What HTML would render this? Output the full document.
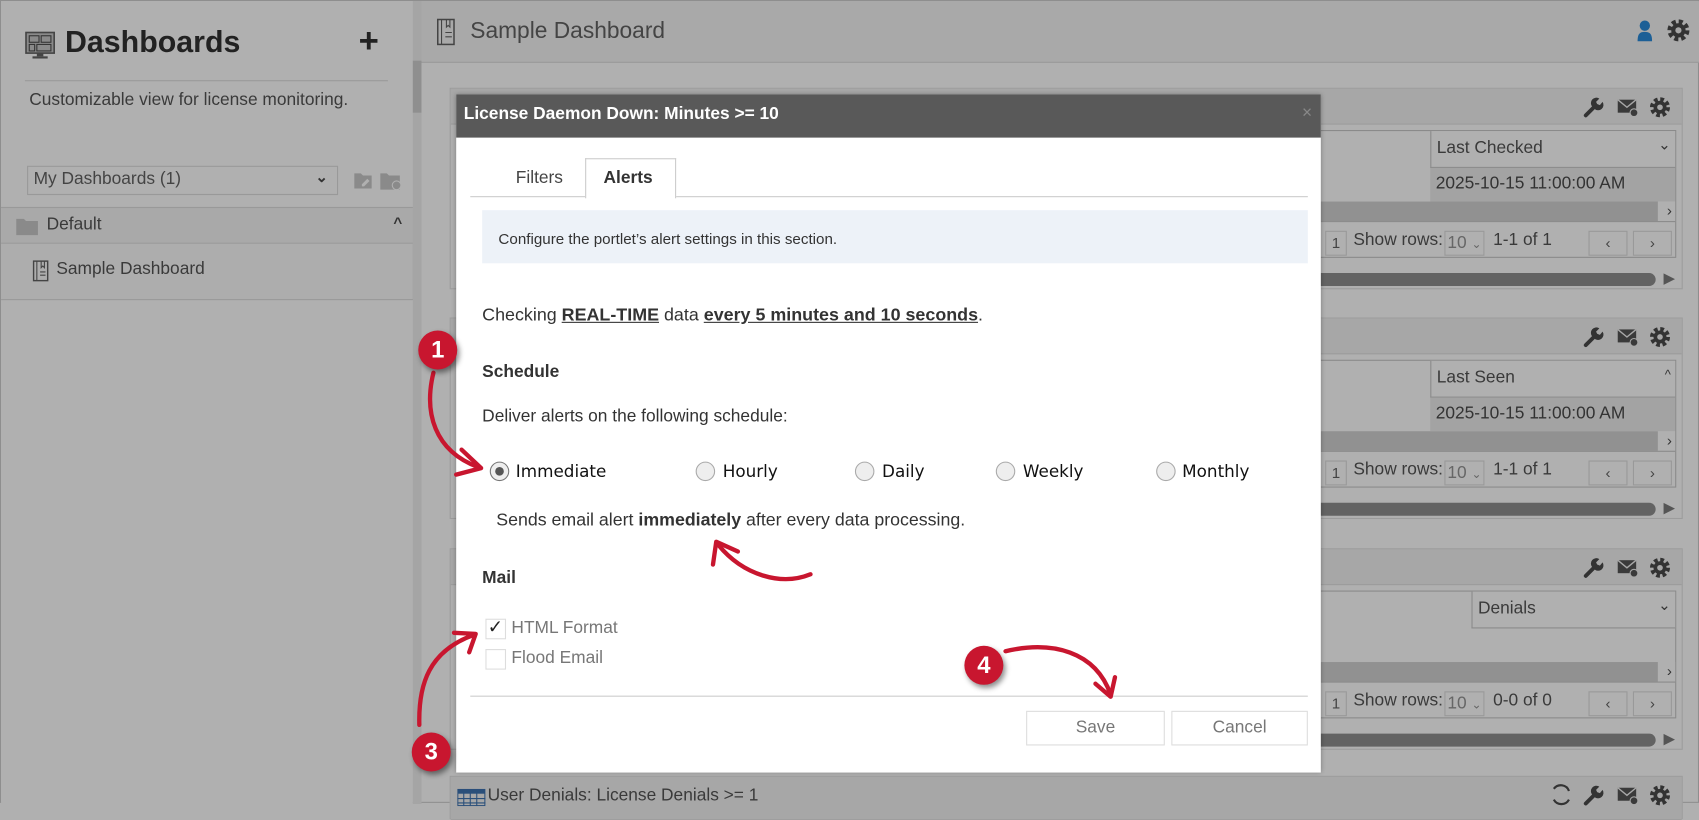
<!DOCTYPE html>
<html><head><meta charset="utf-8"><style>
*{box-sizing:border-box;margin:0;padding:0}
html,body{width:1699px;height:803px;overflow:hidden;background:#b0b0b0}
body{font-family:"Liberation Sans",Arial,sans-serif;color:#333}
#w{position:absolute;left:0;top:0;width:1568px;height:741px;transform:scale(1.08355);transform-origin:0 0;background:#b0b0b0;border:1px solid #8e8e8e}
.a{position:absolute}
.t{position:absolute;white-space:nowrap}
.panel{position:absolute;left:414px;width:1138px;height:186px;border:1px solid #9c9c9c;background:#b0b0b0}
.ph{position:absolute;left:0;top:0;right:0;height:33px;background:#a7a7a7;border-bottom:1px solid #9c9c9c}
.tbl{position:absolute;left:6px;right:5px;top:38px;height:118px;border:1px solid #8a8a8a}
.ch{position:absolute;top:0;height:34px;border-left:1px solid #8a8a8a;border-bottom:1px solid #8a8a8a;left:0;right:0;background:#b0b0b0}
.sb{position:absolute;left:0;right:0;top:65px;height:18px;background:#b0b0b0}
.sb i{position:absolute;left:0;right:16px;top:0;bottom:0;background:#919191}
.pg{position:absolute;left:0;right:0;top:83px;height:34px;border-top:1px solid #8a8a8a;font-size:16px;color:#3a3a3a}
.bs{position:absolute;left:6px;right:24px;top:170px;height:12px;border-radius:6px;background:#636363}
.icons{position:absolute;right:8px;top:6px}
.btn{position:absolute;top:8px;width:36px;height:23px;border:1px solid #999;text-align:center;font-size:14px;line-height:21px;color:#444}
.badge{position:absolute;width:36px;height:36px;border-radius:50%;background:#c8162f;color:#fff;font-weight:bold;font-size:22px;text-align:center;line-height:36px;box-shadow:2px 3px 5px rgba(0,0,0,.45);font-family:"Liberation Sans",sans-serif}
.radio{position:absolute;width:18px;height:18px;border-radius:50%;border:1px solid #aaa;background:#eee}
.rl{position:absolute;white-space:nowrap;font-family:"DejaVu Sans",Verdana,sans-serif;font-size:15.5px;color:#111;top:339px}
</style></head><body><div id="w">
<svg width="0" height="0" style="position:absolute"><defs>
<g id="gear"><circle cx="10" cy="10" r="7" fill="none" stroke="#333" stroke-width="4.5" stroke-dasharray="3.2 2.3"/><circle cx="10" cy="10" r="6" fill="#333"/><circle cx="10" cy="10" r="2.6" fill="#a7a7a7"/></g>
<g id="wrench"><path d="M3.5 18.5 L11 11" stroke="#333" stroke-width="3.6" stroke-linecap="round"/><path d="M9.5 10.5 A5 5 0 0 1 16 3 L13 6 L14 8 L16.5 9 L19 6 A5 5 0 0 1 11.5 12.5 Z" fill="#333"/></g>
<g id="mail"><rect x="1" y="4" width="17" height="12" fill="#3a3a3a"/><path d="M1 4 L9.5 11 L18 4" stroke="#a7a7a7" stroke-width="1.3" fill="none"/><circle cx="16" cy="16" r="3.6" fill="#3a3a3a" stroke="#a7a7a7" stroke-width="1"/></g>
</defs></svg>
<!-- sidebar -->
<div class="a" style="left:0;top:0;width:380px;height:741px;background:#b0b0b0"></div>
<svg class="a" style="left:22px;top:28px" width="28" height="26" viewBox="0 0 28 26"><rect x="1" y="1" width="26" height="19" fill="#8a8a8a" stroke="#444" stroke-width="1.5"/><rect x="4" y="4" width="9" height="6" fill="none" stroke="#333"/><rect x="15" y="4" width="9" height="6" fill="none" stroke="#333"/><rect x="4" y="12" width="5" height="6" fill="none" stroke="#333"/><rect x="11" y="12" width="13" height="6" fill="none" stroke="#333"/><rect x="11" y="20" width="6" height="3" fill="#444"/><rect x="7" y="23" width="14" height="2" fill="#444"/></svg>
<div class="t" style="left:59px;top:22px;font-size:28px;font-weight:bold;color:#222">Dashboards</div>
<div class="t" style="left:330px;top:18px;font-size:32px;font-weight:bold;color:#222">+</div>
<div class="a" style="left:22px;top:73px;width:335px;height:1px;background:#999"></div>
<div class="t" style="left:26px;top:83px;font-size:16px;color:#3a3a3a">Customizable view for license monitoring.</div>
<div class="a" style="left:24px;top:152px;width:287px;height:27px;border:1px solid #999;background:#b0b0b0"></div>
<div class="t" style="left:30px;top:156px;font-size:16px;color:#444">My Dashboards (1)</div>
<div class="t" style="left:290px;top:154px;font-size:14px;font-weight:bold;color:#333">⌄</div>
<svg class="a" style="left:325px;top:155px" width="46" height="20" viewBox="0 0 46 20"><path d="M1 4h6l2 2h8v12H1z" fill="#8a8a8a"/><path d="M8 14l5-5 2 2-5 5H8z" fill="#b0b0b0"/><path d="M25 4h6l2 2h10v13H25z" fill="#8a8a8a"/><circle cx="40" cy="15" r="4" fill="#8a8a8a" stroke="#b0b0b0"/></svg>
<div class="a" style="left:0;top:190px;width:381px;height:34px;background:#a9a9a9;border-top:1px solid #999;border-bottom:1px solid #999"></div>
<svg class="a" style="left:13px;top:199px" width="22" height="18" viewBox="0 0 22 18"><path d="M1 2h7l2 2h11v13H1z" fill="#8a8a8a"/></svg>
<div class="t" style="left:42px;top:198px;font-size:16px;color:#3a3a3a">Default</div>
<div class="t" style="left:362px;top:196px;font-size:14px;font-weight:bold;color:#333">^</div>
<div class="a" style="left:0;top:224px;width:381px;height:52px;background:#adadad;border-bottom:1px solid #999;border-right:1px solid #999"></div>
<svg class="a" style="left:29px;top:239px" width="15" height="20" viewBox="0 0 15 20"><rect x="1" y="1" width="13" height="18" fill="none" stroke="#444" stroke-width="1.3"/><path d="M4 1v18M8 1v6l1.5-1.5L11 7V1M7 11h5M7 14h5" stroke="#444" fill="none"/></svg>
<div class="t" style="left:51px;top:239px;font-size:16px;color:#3a3a3a">Sample Dashboard</div>
<div class="a" style="left:380px;top:0;width:8px;height:741px;background:#a5a5a5"></div>
<div class="a" style="left:380px;top:55px;width:8px;height:48px;background:#8f8f8f"></div>
<!-- main header -->
<div class="a" style="left:388px;top:0;width:1180px;height:57px;background:#a9a9a9;border-bottom:1px solid #999"></div>
<svg class="a" style="left:402px;top:16px" width="17" height="25" viewBox="0 0 17 25"><rect x="1" y="1" width="15" height="23" fill="none" stroke="#444" stroke-width="1.4"/><path d="M4.5 1v23M9 1v7l1.6-1.6L12.2 8V1M8 13h6M8 17h6" stroke="#444" fill="none"/></svg>
<div class="t" style="left:433px;top:16px;font-size:21px;color:#444">Sample Dashboard</div>
<svg class="a" style="left:1508px;top:17px" width="18" height="21" viewBox="0 0 18 22"><circle cx="9" cy="6" r="5" fill="#1c5f96"/><path d="M2 21c0-7 2-9 7-9s7 2 7 9z" fill="#1c5f96"/></svg>
<svg class="a" style="left:1537px;top:16px" width="22" height="22" viewBox="0 0 20 20"><use href="#gear"/></svg>

<!-- panels -->
<div class="panel" style="top:80px">
 <div class="ph"><svg class="icons" width="84" height="22" viewBox="0 0 84 22"><use href="#wrench" x="0" y="0"/><use href="#mail" x="32" y="0"/><use href="#gear" x="62" y="1"/></svg></div>
 <div class="tbl">
  <div class="ch" style="left:897px;right:0"><span class="t" style="left:5px;top:7px;font-size:16px;color:#3a3a3a">Last Checked</span><span class="t" style="right:4px;top:4px;font-size:14px">⌄</span></div>
  <div class="a" style="left:897px;right:0;top:34px;height:31px;background:#a3a3a3"><span class="t" style="left:5px;top:6px;font-size:16px;color:#333">2025-10-15 11:00:00 AM</span></div>
  <div class="sb"><i></i><span class="t" style="right:3px;top:0;font-size:14px">›</span></div>
  <div class="pg"><div class="btn" style="left:800px;width:20px">1</div><span class="t" style="left:826px;top:8px">Show rows:</span><div class="btn" style="left:910px;width:37px;color:#666;font-size:16px">10 <span style="font-size:11px">⌄</span></div><span class="t" style="left:955px;top:8px">1-1 of 1</span><div class="btn" style="left:1043px">‹</div><div class="btn" style="left:1084px">›</div></div>
 </div>
 <div class="bs"></div><div class="t" style="right:6px;top:166px;font-size:14px;color:#555">▶</div>
</div>
<div class="panel" style="top:292px">
 <div class="ph"><svg class="icons" width="84" height="22" viewBox="0 0 84 22"><use href="#wrench" x="0" y="0"/><use href="#mail" x="32" y="0"/><use href="#gear" x="62" y="1"/></svg></div>
 <div class="tbl">
  <div class="ch" style="left:897px;right:0"><span class="t" style="left:5px;top:7px;font-size:16px;color:#3a3a3a">Last Seen</span><span class="t" style="right:4px;top:6px;font-size:12px">^</span></div>
  <div class="a" style="left:897px;right:0;top:34px;height:31px;background:#a3a3a3"><span class="t" style="left:5px;top:6px;font-size:16px;color:#333">2025-10-15 11:00:00 AM</span></div>
  <div class="sb"><i></i><span class="t" style="right:3px;top:0;font-size:14px">›</span></div>
  <div class="pg"><div class="btn" style="left:800px;width:20px">1</div><span class="t" style="left:826px;top:8px">Show rows:</span><div class="btn" style="left:910px;width:37px;color:#666;font-size:16px">10 <span style="font-size:11px">⌄</span></div><span class="t" style="left:955px;top:8px">1-1 of 1</span><div class="btn" style="left:1043px">‹</div><div class="btn" style="left:1084px">›</div></div>
 </div>
 <div class="bs"></div><div class="t" style="right:6px;top:166px;font-size:14px;color:#555">▶</div>
</div>
<div class="panel" style="top:505px">
 <div class="ph"><svg class="icons" width="84" height="22" viewBox="0 0 84 22"><use href="#wrench" x="0" y="0"/><use href="#mail" x="32" y="0"/><use href="#gear" x="62" y="1"/></svg></div>
 <div class="tbl">
  <div class="ch" style="left:935px;right:0"><span class="t" style="left:5px;top:7px;font-size:16px;color:#3a3a3a">Denials</span><span class="t" style="right:4px;top:4px;font-size:14px">⌄</span></div>
  <div class="sb"><i></i><span class="t" style="right:3px;top:0;font-size:14px">›</span></div>
  <div class="pg"><div class="btn" style="left:800px;width:20px">1</div><span class="t" style="left:826px;top:8px">Show rows:</span><div class="btn" style="left:910px;width:37px;color:#666;font-size:16px">10 <span style="font-size:11px">⌄</span></div><span class="t" style="left:955px;top:8px">0-0 of 0</span><div class="btn" style="left:1043px">‹</div><div class="btn" style="left:1084px">›</div></div>
 </div>
 <div class="bs"></div><div class="t" style="right:6px;top:166px;font-size:14px;color:#555">▶</div>
</div>
<div class="panel" style="top:715px;height:40px">
 <div class="ph" style="height:40px"><svg class="a" style="left:6px;top:11px" width="26" height="16"><rect x="0.5" y="0.5" width="25" height="15" fill="none" stroke="#2a4f7a"/><rect x="0.5" y="0.5" width="25" height="4" fill="#2a4f7a"/><path d="M6 4v12M12 4v12M18 4v12M0 9h26M0 13h26" stroke="#2a4f7a"/></svg><span class="t" style="left:34px;top:9px;font-size:16px;color:#3a3a3a">User Denials: License Denials &gt;= 1</span>
 <svg class="icons" width="116" height="22" viewBox="0 0 116 22"><path d="M6 5 A8 8 0 0 1 20 7 M20 15 A8 8 0 0 1 6 15" stroke="#333" stroke-width="2" fill="none"/><use href="#wrench" x="32" y="0"/><use href="#mail" x="64" y="0"/><use href="#gear" x="94" y="1"/></svg></div>
</div>

<!-- modal -->
<div class="a" style="left:420px;top:86px;width:798px;height:626px;background:#fff;box-shadow:0 0 4px rgba(0,0,0,.3)">
 <div class="a" style="left:0;top:0;right:0;height:40px;background:#595959"></div>
 <div class="t" style="left:7px;top:10px;font-size:16px;font-weight:bold;color:#fff">License Daemon Down: Minutes &gt;= 10</div>
 <div class="t" style="right:8px;top:9px;font-size:16px;color:#888">×</div>
 <div class="a" style="left:13px;top:94px;width:773px;height:1px;background:#ccc"></div>
 <div class="t" style="left:55px;top:69px;font-size:16px;color:#444">Filters</div>
 <div class="a" style="left:119px;top:59px;width:84px;height:37px;background:#fff;border:1px solid #ccc;border-bottom:none"></div>
 <div class="t" style="left:136px;top:69px;font-size:16px;font-weight:bold;color:#333">Alerts</div>
 <div class="a" style="left:24px;top:107px;width:762px;height:49px;background:#edf2f8"></div>
 <div class="t" style="left:39px;top:125px;font-size:14px;color:#333">Configure the portlet’s alert settings in this section.</div>
 <div class="t" style="left:24px;top:195px;font-size:16.5px;color:#333">Checking <b style="text-decoration:underline">REAL-TIME</b> data <b style="text-decoration:underline">every 5 minutes and 10 seconds</b>.</div>
 <div class="t" style="left:24px;top:248px;font-size:16px;font-weight:bold;color:#333">Schedule</div>
 <div class="t" style="left:24px;top:289px;font-size:16px;color:#333">Deliver alerts on the following schedule:</div>
 <div class="radio" style="left:31px;top:339px;border-color:#777"><div class="a" style="left:4px;top:4px;width:8px;height:8px;border-radius:50%;background:#555"></div></div>
 <div class="rl" style="left:55px">Immediate</div>
 <div class="radio" style="left:221px;top:339px"></div><div class="rl" style="left:246px">Hourly</div>
 <div class="radio" style="left:368px;top:339px"></div><div class="rl" style="left:393px">Daily</div>
 <div class="radio" style="left:498px;top:339px"></div><div class="rl" style="left:523px">Weekly</div>
 <div class="radio" style="left:646px;top:339px"></div><div class="rl" style="left:670px">Monthly</div>
 <div class="t" style="left:37px;top:384px;font-size:16.4px;color:#333">Sends email alert <b>immediately</b> after every data processing.</div>
 <div class="t" style="left:24px;top:438px;font-size:16px;font-weight:bold;color:#333">Mail</div>
 <div class="a" style="left:27px;top:484px;width:19px;height:19px;border:1px solid #ddd"></div>
 <div class="t" style="left:29px;top:482px;font-size:17px;color:#222">✓</div>
 <div class="t" style="left:51px;top:484px;font-size:16px;color:#777">HTML Format</div>
 <div class="a" style="left:27px;top:512px;width:19px;height:19px;border:1px solid #ddd"></div>
 <div class="t" style="left:51px;top:512px;font-size:16px;color:#777">Flood Email</div>
 <div class="a" style="left:13px;top:555px;width:773px;height:1px;background:#ccc"></div>
 <div class="a" style="left:526px;top:569px;width:128px;height:32px;border:1px solid #ddd;text-align:center;line-height:30px;font-size:16px;color:#777">Save</div>
 <div class="a" style="left:660px;top:569px;width:126px;height:32px;border:1px solid #ddd;text-align:center;line-height:30px;font-size:16px;color:#777">Cancel</div>
</div>

<!-- annotations -->
<svg class="a" style="left:0;top:0" width="1568" height="741" viewBox="0 0 1568 741">
 <g fill="none" stroke="#c8162f" stroke-width="4" stroke-linecap="round" stroke-linejoin="round">
  <path d="M399 343 C390 380 400 415 440 430"/><path d="M425 414 L443 431 L420 437"/>
  <path d="M747 529 C720 540 685 530 662 502"/><path d="M657 520 L660 499 L680 508"/>
  <path d="M386 668 C385 630 395 600 436 585"/><path d="M418 583 L438 584 L432 601"/>
  <path d="M927 600 C970 590 1010 600 1024 640"/><path d="M1010 630 L1024 642 L1028 624"/>
 </g>
</svg>
<div class="badge" style="left:385px;top:304px">1</div>
<div class="badge" style="left:379px;top:675px">3</div>
<div class="badge" style="left:889px;top:595px">4</div>
</div></body></html>
